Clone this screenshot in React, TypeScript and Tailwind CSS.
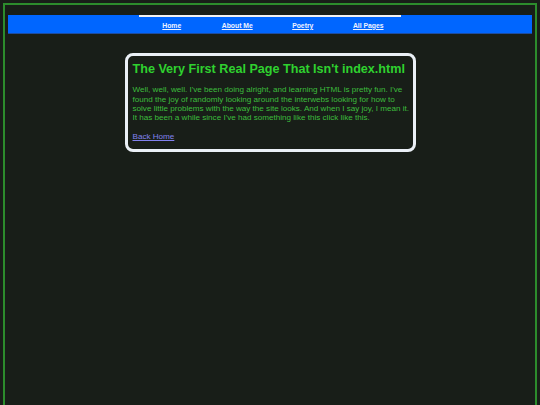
const links = ['Home', 'About Me', 'Poetry', 'All Pages'];

export default function App() {
  return (
    <div className="min-h-screen bg-[#181e18] p-[3px] font-['Liberation_Sans',Arial,sans-serif]">
      <div className="min-h-[560px] border-2 border-[#2c8c2c] px-[3px] pt-[10px]">
        <nav className="border-b border-[#1d4c9e] bg-[#0066ff]">
          <ul className="mx-auto flex w-[262px] border-t-2 border-[#f2f2f2]">
            {links.map((link) => (
              <li key={link} className="flex h-[16px] flex-1 items-center justify-center pt-[2px]">
                <a href="#" className="text-[6.8px] leading-none font-bold text-[#eef2ff] underline">
                  {link}
                </a>
              </li>
            ))}
          </ul>
        </nav>

        <section className="mx-auto mt-[19px] w-[291px] rounded-[8px] border-[3px] border-[#eaf0f6] px-[4px] pb-[8px] pt-[6px]">
          <h1 className="mb-[9px] pl-px text-[12.6px] leading-[1.15] font-bold text-[#2fd12f]">
            The Very First Real Page That Isn't index.html
          </h1>
          <p className="-mr-[4px] mb-[9px] pl-px text-[8.1px] leading-[1.15] text-[#3dbd3d]">
            Well, well, well. I've been doing alright, and learning HTML is pretty fun. I've found the joy of randomly
            looking around the interwebs looking for how to solve little problems with the way the site looks. And when
            I say joy, I mean it. It has been a while since I've had something like this click like this.
          </p>
          <p className="pl-px text-[8.1px] leading-[1.15]">
            <a href="#" className="text-[#8282ee] underline">Back Home</a>
          </p>
        </section>
      </div>
    </div>
  );
}
